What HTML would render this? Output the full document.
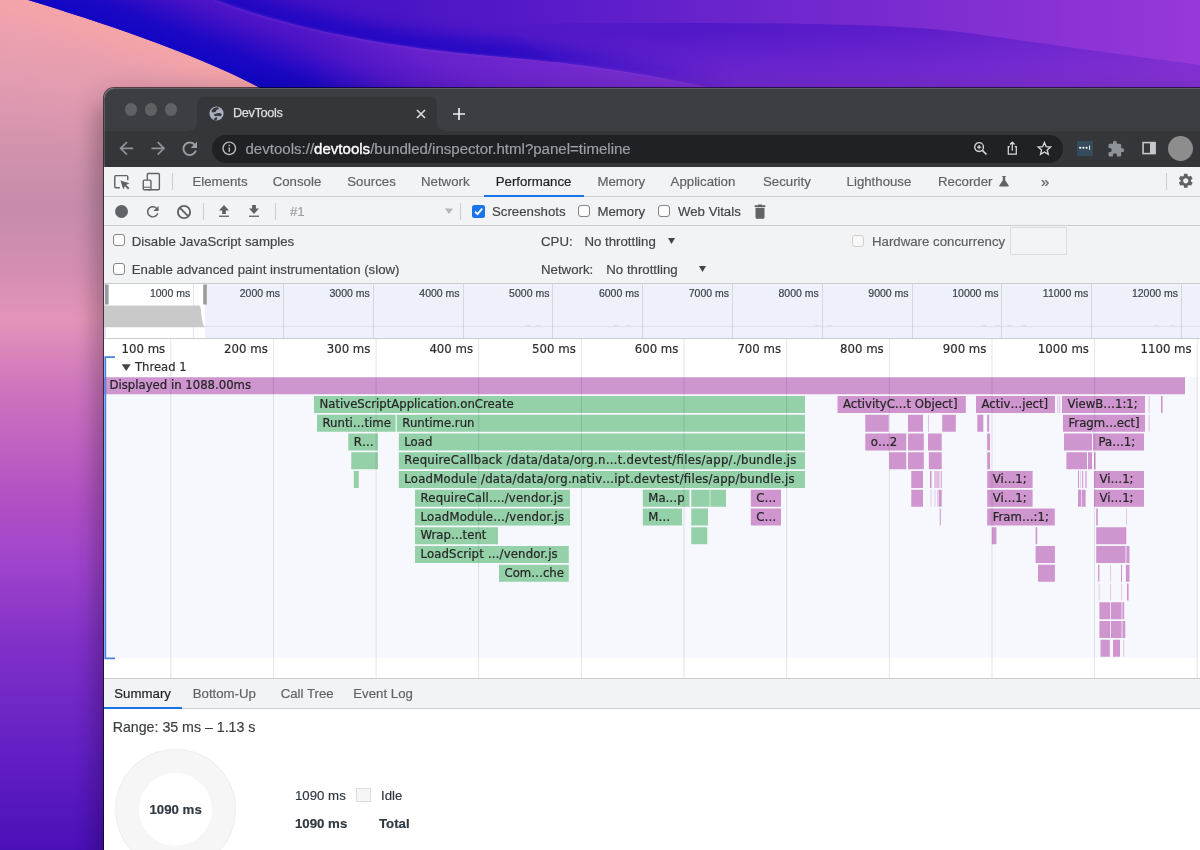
<!DOCTYPE html>
<html lang="en">
<head>
<meta charset="utf-8">
<title>DevTools</title>
<style>
html,body{margin:0;padding:0;}
body{width:1200px;height:850px;overflow:hidden;position:relative;background:#7a2ccc;font-family:"Liberation Sans",sans-serif;}
#wall{position:absolute;left:0;top:0;}
#flame{position:absolute;left:0;top:0;}
#win{position:absolute;left:104px;top:88px;width:1120px;height:800px;border-radius:10px 0 0 0;background:#fff;box-shadow:0 10px 30px rgba(0,0,0,.32),0 0 0 1px rgba(0,0,0,.6);will-change:transform;overflow:hidden;}
.abs{position:absolute;}
#tabstrip{left:0;top:0;width:1120px;height:43px;background:#3c3e43;}
#tab{left:92px;top:8px;width:240px;height:36px;background:#35363a;border-radius:9px 9px 0 0;}
#navbar{left:0;top:42.500px;width:1120px;height:36px;background:#35363a;}
#pill{left:108px;top:46.5px;width:851px;height:28px;border-radius:14px;background:#202124;}
.tl{width:12.4px;height:12.4px;border-radius:6.2px;background:#5f6165;top:15.3px;}
.t{position:absolute;white-space:pre;line-height:1;-webkit-text-stroke:0.18px currentColor;}
#dt-tabs{left:0;top:79px;width:1120px;height:29px;background:#f1f3f4;border-bottom:1px solid #cbcdd1;}
#dt-tool{left:0;top:109px;width:1120px;height:28px;background:#f1f3f4;border-bottom:1px solid #cbcdd1;}
#dt-set{left:0;top:138px;width:1120px;height:57px;background:#f1f3f4;border-bottom:1px solid #cbcdd1;}
.tabt{font-size:13.24px;color:#5f6368;top:87.4px;}
.lbl{font-size:13.24px;color:#42464b;}
.cb{position:absolute;width:10px;height:10px;border:1.25px solid #858585;border-radius:3px;background:#fff;}
.vsep{position:absolute;width:1px;background:#cbcdd1;}
#ov{left:0;top:196px;width:1120px;height:54px;background:#fff;border-bottom:1px solid #cbcdd1;}
#fc{left:0;top:251px;width:1120px;height:339px;background:#fff;}
#fcbg{left:0;top:289px;width:1094px;height:281px;background:#f6f8fe;}
#btabs{left:0;top:590px;width:1120px;height:29px;background:#f1f3f4;border-top:1px solid #cbcdd1;border-bottom:1px solid #cbcdd1;}
.ovl{font-size:10.500px;color:#3a404a;top:200px;text-align:right;width:60px;}
</style>
</head>
<body>
<svg id="wall" width="1200" height="850" viewBox="0 0 1200 850">
<defs>
<linearGradient id="gl" x1="0" y1="0" x2="0" y2="1">
<stop offset="0" stop-color="#eea2b0"/><stop offset="0.12" stop-color="#dc98b0"/><stop offset="0.24" stop-color="#c68caa"/>
<stop offset="0.32" stop-color="#d48eb0"/><stop offset="0.375" stop-color="#e494b8"/><stop offset="0.46" stop-color="#cc74be"/>
<stop offset="0.59" stop-color="#b050c4"/><stop offset="0.66" stop-color="#a044cc"/><stop offset="0.76" stop-color="#8030c8"/>
<stop offset="0.88" stop-color="#6420c4"/><stop offset="1" stop-color="#4a10b8"/>
</linearGradient>
<linearGradient id="gp" gradientUnits="userSpaceOnUse" x1="150" y1="40" x2="105" y2="160">
<stop offset="0" stop-color="#f8a6a4" stop-opacity="0.8"/><stop offset="0.3" stop-color="#f4a4aa" stop-opacity="0.35"/><stop offset="1" stop-color="#eea2b0" stop-opacity="0"/>
</linearGradient>
<linearGradient id="gt" x1="0" y1="0" x2="1" y2="0">
<stop offset="0" stop-color="#3a10c4"/><stop offset="0.2" stop-color="#4010c4"/><stop offset="0.4" stop-color="#5218c8"/><stop offset="0.6" stop-color="#6a24cc"/>
<stop offset="0.8" stop-color="#802ed2"/><stop offset="1" stop-color="#9838d8"/>
</linearGradient>
<linearGradient id="gm" x1="0" y1="0" x2="1" y2="0">
<stop offset="0" stop-color="#5218c8"/><stop offset="0.25" stop-color="#5018c8"/><stop offset="0.6" stop-color="#5e1eca"/><stop offset="1" stop-color="#7a2cd0"/>
</linearGradient>
<linearGradient id="gmv" gradientUnits="userSpaceOnUse" x1="0" y1="30" x2="0" y2="92">
<stop offset="0" stop-color="#9038d6" stop-opacity="0"/><stop offset="1" stop-color="#9038d6" stop-opacity="0.55"/>
</linearGradient>
<linearGradient id="gb" gradientUnits="userSpaceOnUse" x1="150" y1="40" x2="215" y2="-130">
<stop offset="0" stop-color="#1206c4"/><stop offset="0.1" stop-color="#1c08c4"/><stop offset="0.28" stop-color="#4a12c6"/><stop offset="0.45" stop-color="#5e1cca"/><stop offset="1" stop-color="#6c26cc"/>
</linearGradient>
<linearGradient id="gbx" x1="0" y1="0" x2="1" y2="0">
<stop offset="0" stop-color="#7a2ed0" stop-opacity="0"/><stop offset="0.4" stop-color="#7a2ed0" stop-opacity="0"/><stop offset="1" stop-color="#7e30d2" stop-opacity="0.9"/>
</linearGradient>
<linearGradient id="gs" gradientUnits="userSpaceOnUse" x1="215" y1="0" x2="740" y2="0"><stop offset="0" stop-color="#1c06c2"/><stop offset="0.55" stop-color="#2409c3"/><stop offset="1" stop-color="#3c10c6" stop-opacity="0"/></linearGradient>
<filter id="bl" color-interpolation-filters="sRGB" filterUnits="userSpaceOnUse" x="-50" y="-100" width="1300" height="300"><feGaussianBlur stdDeviation="7"/></filter>
<filter id="bls" color-interpolation-filters="sRGB" filterUnits="userSpaceOnUse" x="0" y="0" width="300" height="900"><feGaussianBlur stdDeviation="7"/></filter>
<filter id="bl2" color-interpolation-filters="sRGB" x="-20%" y="-50%" width="140%" height="200%"><feGaussianBlur stdDeviation="1.2"/></filter>
<clipPath id="cpM"><path d="M215,0 C300,32 400,49 500,57 C600,65 660,77 720,90 L1200,90 L1200,0 Z"/></clipPath>
</defs>
<rect width="1200" height="850" fill="url(#gl)"/>
<path d="M0,0 L28,0 C100,22 200,55 262,88 L262,300 L0,300 Z" fill="url(#gp)"/>
<rect x="90" y="110" width="20" height="760" fill="#000" opacity="0.07" filter="url(#bls)"/>
<g>
<path d="M28,0 C100,22 200,55 264,90 L1200,90 L1200,0 Z" fill="url(#gt)"/>
<path d="M500,57 C600,65 660,77 720,90 L1200,90 L1200,65 C1100,52 1020,40 960,32 C900,25 800,21 500,24 Z" fill="url(#gm)"/>
<path d="M500,24 C800,21 900,25 960,32 C1020,40 1100,52 1200,65 L1200,92 L600,92 Z" fill="url(#gmv)"/>
<g clip-path="url(#cpM)"><path d="M215,0 C300,32 400,49 500,57 C600,65 660,77 720,90" fill="none" stroke="url(#gs)" stroke-width="34" opacity="0.85" filter="url(#bl)"/></g>
<path d="M28,0 C100,22 200,55 264,90 L720,90 C660,77 600,65 500,57 C400,49 300,32 215,0 Z" fill="url(#gb)"/>
<path d="M28,0 C100,22 200,55 264,90 L720,90 C660,77 600,65 500,57 C400,49 300,32 215,0 Z" fill="url(#gbx)"/>
<path d="M215,0 C300,32 400,49 500,57 C600,65 660,77 720,90" fill="none" stroke="#8a48dc" stroke-width="1.5" opacity="0.35" filter="url(#bl2)"/>
</g>
</svg>

<div id="win">
 <div id="tabstrip" class="abs"></div>
 <svg class="abs" style="left:80px;top:0" width="270" height="43" viewBox="184 88 270 43"><path fill="#35363a" d="M188.500 131 L188.500 130.500 Q197 130.500 197 122 L197 104.500 Q197 96.400 205 96.400 L429 96.400 Q437 96.400 437 104.500 L437 122 Q437 130.500 445.500 130.500 L445.500 131 Z"/></svg>
 <div id="navbar" class="abs"></div>
 <div id="pill" class="abs"></div>
 <div class="abs tl" style="left:20.600px"></div><div class="abs tl" style="left:40.600px"></div><div class="abs tl" style="left:60.600px"></div>
 <div class="t" style="left:129px;top:19px;font-size:12.7px;color:#dcdee1;letter-spacing:-0.35px;-webkit-text-stroke:0.25px #dcdee1">DevTools</div>
 <div class="t" style="left:141.5px;top:52.5px;font-size:15.050px;color:#9aa0a6">devtools://<span style="color:#fff;-webkit-text-stroke:0.35px #fff">devtools</span>/bundled/inspector.html?panel=timeline</div>
 <!--CHROMEICONS-->
 <svg class="abs" style="left:11.60px;top:50.20px" width="20.6" height="20.6" viewBox="0 0 24 24" ><path fill="#8f9399" d="M20 11H7.83l5.59-5.59L12 4l-8 8 8 8 1.41-1.41L7.83 13H20v-2z"/></svg>
 <svg class="abs" style="left:43.70px;top:50.20px" width="20.6" height="20.6" viewBox="0 0 24 24" ><path fill="#8f9399" d="M12 4l-1.41 1.41L16.17 11H4v2h12.17l-5.58 5.59L12 20l8-8z"/></svg>
 <svg class="abs" style="left:75.20px;top:49.50px" width="21.6" height="21.6" viewBox="0 0 24 24" ><path fill="#9aa0a6" d="M17.65 6.35C16.2 4.9 14.21 4 12 4c-4.42 0-7.99 3.58-7.99 8s3.57 8 7.99 8c3.73 0 6.84-2.55 7.73-6h-2.08c-.82 2.33-3.04 4-5.65 4-3.31 0-6-2.69-6-6s2.69-6 6-6c1.66 0 3.14.69 4.22 1.78L13 11h7V4l-2.35 2.35z"/></svg>
 <svg class="abs" style="left:117.30px;top:52.20px" width="16.6" height="16.6" viewBox="0 0 24 24" ><path fill="#b9bdc3" d="M11 17h2v-6h-2v6zm1-15C6.48 2 2 6.48 2 12s4.48 10 10 10 10-4.48 10-10S17.52 2 12 2zm0 18c-4.41 0-8-3.59-8-8s3.59-8 8-8 8 3.59 8 8-3.59 8-8 8zM11 9h2V7h-2v2z"/></svg>
 <svg class="abs" style="left:104.40px;top:16.80px" width="17" height="17" viewBox="0 0 24 24" ><circle cx="12" cy="12" r="10" fill="#a9b0bb"/><g fill="#35363a" transform="translate(12 12) scale(1.22) translate(-12.200 -12.400)"><path d="M6.500 9.300C7.500 7 10 5.200 13.400 5.200C14.600 5.400 15.200 6.200 14.900 6.900C14.200 7.800 13 7.600 12.400 8.300C11.800 9.200 11.600 10.400 10.600 10.800C9.400 11.300 7.600 11.200 6.800 10.600Z"/><path d="M9 13.400C10.400 12.400 12 12.600 13.400 12.100C15 11.600 17.200 12.200 18.200 13.200C18 14.600 17.200 15.600 16.100 15.600C15.200 15.400 14.400 14.800 13.400 14.900C12.600 15 12.200 15.600 11.400 15.600C10.400 15.500 9.200 14.600 9 13.400Z"/><path d="M9 18.600C10 17.800 11 16.900 12 16.700C12.800 16.900 13.400 17.300 13.400 17.900C12.900 18.900 12.200 19.800 11.400 20.300C10.400 20.100 9.400 19.500 9 18.600Z"/></g></svg>
 <svg class="abs" style="left:311.60px;top:20.50px" width="10" height="10" viewBox="0 0 10 10" ><path d="M1 1 L9 9 M9 1 L1 9" stroke="#dfe1e5" stroke-width="1.5" fill="none"/></svg>
 <svg class="abs" style="left:347.75px;top:18.50px" width="14" height="14" viewBox="0 0 14 14" ><path d="M7 1 V13 M1 7 H13" stroke="#eceef1" stroke-width="1.7" fill="none"/></svg>
 <svg class="abs" style="left:868.00px;top:51.80px" width="17" height="17" viewBox="0 0 24 24" ><g fill="none" stroke="#d5d8dc" stroke-width="1.9"><circle cx="10" cy="10" r="6.2"/><path d="M14.6 14.6 L20.5 20.5" stroke-width="2.3"/><path d="M10 7v6M7 10h6" stroke-width="1.6"/></g></svg>
 <svg class="abs" style="left:900.20px;top:52.00px" width="16.6" height="16.6" viewBox="0 0 24 24" ><g fill="none" stroke="#d5d8dc" stroke-width="1.8"><path d="M8.5 9.5H6.2v11h11.6v-11h-2.3"/><path d="M12 15.5V3.5M8.6 6.6L12 3.2l3.4 3.400"/></g></svg>
 <svg class="abs" style="left:932.10px;top:51.80px" width="16.8" height="16.8" viewBox="0 0 24 24" ><path fill="none" stroke="#d5d8dc" stroke-width="1.9" stroke-linejoin="miter" d="M12 3.6l2.55 5.9 6.35.55-4.82 4.2 1.450 6.25L12 17.2l-5.53 3.300 1.45-6.25-4.82-4.2 6.35-.55z"/></svg>
 <div class="abs" style="left:973px;top:52.5px;width:15.5px;height:15.5px;background:#364c5c;border-radius:1px"></div>
 <svg class="abs" style="left:972.95px;top:52.45px" width="15.5" height="15.5" viewBox="0 0 15.5 15.5" ><g fill="#fff"><circle cx="3.2" cy="7.75" r="1.1"/><circle cx="6.4" cy="7.75" r="1.1"/><circle cx="9.6" cy="7.75" r="1.1"/><rect x="12" y="5.6" width="0.9" height="4.3"/></g></svg>
 <svg class="abs" style="left:1003.00px;top:51.50px" width="18" height="18" viewBox="0 0 24 24" ><path fill="#8d9298" d="M20.5 11H19V7c0-1.1-.9-2-2-2h-4V3.5C13 2.12 11.880 1 10.5 1S8 2.12 8 3.5V5H4c-1.100 0-1.990.9-1.990 2v3.800H3.500c1.490 0 2.700 1.210 2.700 2.700s-1.210 2.700-2.700 2.700H2V20c0 1.100.9 2 2 2h3.800v-1.500c0-1.490 1.210-2.700 2.700-2.700 1.490 0 2.700 1.210 2.700 2.700V22H17c1.100 0 2-.9 2-2v-4h1.500c1.380 0 2.500-1.120 2.500-2.500S21.880 11 20.500 11z"/></svg>
 <svg class="abs" style="left:1037.60px;top:53.40px" width="14.2" height="14.2" viewBox="0 0 16 16" ><rect x="1.200" y="1.800" width="13.600" height="12.400" fill="none" stroke="#c4c7cc" stroke-width="1.800"/><rect x="9" y="1.8" width="5.8" height="12.4" fill="#c4c7cc"/></svg>
 <div class="abs" style="left:1064.0px;top:48.099999999999994px;width:25px;height:25px;border-radius:50%;background:#8d8d8d"></div>
 <!--/CHROMEICONS-->

 <div class="abs" style="left:0;top:0;width:1130px;height:79px;border-radius:10px 0 0 0;box-shadow:inset 1px 1px 0 rgba(255,255,255,.16);pointer-events:none"></div>
 <div id="dt-tabs" class="abs"></div>
 <div class="t tabt" style="left:88.4px">Elements</div>
 <div class="t tabt" style="left:168.7px">Console</div>
 <div class="t tabt" style="left:243.3px">Sources</div>
 <div class="t tabt" style="left:317px">Network</div>
 <div class="t tabt" style="left:391.7px;color:#202124">Performance</div>
 <div class="t tabt" style="left:493.4px">Memory</div>
 <div class="t tabt" style="left:566.6px">Application</div>
 <div class="t tabt" style="left:659px">Security</div>
 <div class="t tabt" style="left:742.6px">Lighthouse</div>
 <div class="t tabt" style="left:834px">Recorder</div>
 <div class="t tabt" style="left:937px;font-size:15px;top:86px">»</div>
 <div class="abs" style="left:380px;top:107px;width:100px;height:2px;background:#1a73e8"></div>
 <div class="vsep" style="left:67.5px;top:85px;height:17px"></div>
 <div class="vsep" style="left:1062px;top:85px;height:17px"></div>
 <!--DTICONS-->
 <svg class="abs" style="left:8.80px;top:84.50px" width="17.6" height="17.6" viewBox="0 0 16 16" ><g fill="none" stroke="#5f6368" stroke-width="1.300"><path d="M6.200 13.400H2.600c-.55 0-1-.45-1-1V3.400c0-.55.45-1 1-1h9.800c.55 0 1 .45 1 1v3.200"/></g><path fill="#5f6368" d="M6.800 6.800l2.500 8.200 1.500-3 2.900 2.900 1.200-1.200-2.900-2.900 3-1.500z"/></svg>
 <svg class="abs" style="left:38.20px;top:83.90px" width="19.2" height="19.2" viewBox="0 0 18 18" ><g fill="none" stroke="#5f6368" stroke-width="1.300"><rect x="5" y="1.400" width="11.300" height="15.200" rx="1"/><rect x="1.2" y="7.600" width="7.200" height="9" rx="1" fill="#f1f3f4"/></g><path d="M1.800 14.300h6" stroke="#5f6368" stroke-width="1"/></svg>
 <svg class="abs" style="left:1073.25px;top:84.25px" width="17.5" height="17.5" viewBox="0 0 24 24" ><path fill="#5f6368" d="M19.140 12.940c.04-.3.060-.61.060-.94 0-.32-.02-.64-.07-.94l2.030-1.580c.18-.14.230-.41.120-.61l-1.920-3.320c-.12-.22-.37-.29-.59-.22l-2.390.96c-.5-.38-1.030-.7-1.620-.94l-.36-2.540c-.04-.24-.24-.41-.48-.41h-3.840c-.24 0-.43.170-.47.410l-.36 2.540c-.59.240-1.130.570-1.620.940l-2.390-.96c-.22-.08-.47 0-.59.220L2.740 8.870c-.12.210-.08.470.12.610l2.030 1.580c-.05.300-.09.630-.09.940s.02.640.07.940l-2.030 1.580c-.18.140-.23.410-.12.610l1.920 3.320c.12.220.37.290.59.220l2.390-.96c.5.380 1.030.7 1.620.94l.36 2.540c.05.240.24.410.48.410h3.840c.24 0 .44-.17.470-.41l.36-2.540c.59-.24 1.130-.56 1.620-.94l2.390.96c.22.080.47 0 .59-.22l1.920-3.320c.12-.22.070-.47-.12-.61l-2.010-1.580zM12 15.600c-1.980 0-3.600-1.620-3.600-3.600s1.620-3.600 3.600-3.600 3.600 1.620 3.600 3.600-1.620 3.600-3.600 3.600z"/></svg>
 <svg class="abs" style="left:893.50px;top:87.00px" width="12" height="12" viewBox="0 0 12 12" ><path fill="#5f6368" d="M4.300 1h3.400v1H7.200v3.200l3.500 5.300c.3.500 0 1.100-.6 1.100H1.900c-.6 0-.9-.6-.6-1.100l3.500-5.300V2H4.300z"/></svg>
 <!--/DTICONS-->

 <div id="dt-tool" class="abs"></div>
 <div class="vsep" style="left:99px;top:114.5px;height:17px"></div>
 <div class="vsep" style="left:170.5px;top:114.5px;height:17px"></div>
 <div class="vsep" style="left:356px;top:114.5px;height:17px"></div>
 <div class="t" style="left:186px;top:117px;font-size:13.24px;color:#9aa0a6">#1</div>
 <div class="t lbl" style="left:388px;top:117px">Screenshots</div>
 <div class="t lbl" style="left:493.4px;top:117px">Memory</div>
 <div class="t lbl" style="left:574px;top:117px">Web Vitals</div>
 <div class="abs" style="left:368px;top:117px;width:13px;height:13px;border-radius:2.500px;background:#1a73e8"></div>
 <svg class="abs" style="left:368px;top:117px" width="13" height="13" viewBox="0 0 13 13"><path d="M3 6.6 L5.5 9.2 L10.2 3.6" fill="none" stroke="#fff" stroke-width="1.8"/></svg>
 <div class="cb" style="left:474px;top:117.300px"></div>
 <div class="cb" style="left:553.500px;top:117.300px"></div>
 <!--TOOLICONS-->
 <div class="abs" style="left:10.50px;top:116.75px;width:13.5px;height:13.5px;border-radius:50%;background:#5f6368"></div>
 <svg class="abs" style="left:39.55px;top:114.55px" width="17.5" height="17.5" viewBox="0 0 24 24" ><path fill="#5f6368" d="M17.65 6.35C16.2 4.9 14.21 4 12 4c-4.42 0-7.99 3.58-7.99 8s3.57 8 7.99 8c3.73 0 6.84-2.55 7.73-6h-2.08c-.82 2.33-3.04 4-5.65 4-3.31 0-6-2.69-6-6s2.69-6 6-6c1.66 0 3.14.69 4.22 1.78L13 11h7V4l-2.35 2.35z"/></svg>
 <svg class="abs" style="left:71.80px;top:115.50px" width="16" height="16" viewBox="0 0 16 16" ><g fill="none" stroke="#5f6368" stroke-width="1.900"><circle cx="8" cy="8" r="6.100"/><path d="M3.700 3.700L12.300 12.300"/></g></svg>
 <svg class="abs" style="left:112.50px;top:116.30px" width="14" height="14" viewBox="0 0 14 14" ><path fill="#5f6368" d="M7 1L2 6.500h3.100V10h3.800V6.500H12z"/><rect x="2" y="11.600" width="10" height="1.300" fill="#5f6368"/></svg>
 <svg class="abs" style="left:143.40px;top:116.30px" width="14" height="14" viewBox="0 0 14 14" ><path fill="#5f6368" d="M7 10L2 4.500h3.100V1h3.800v3.500H12z"/><rect x="2" y="11.600" width="10" height="1.300" fill="#5f6368"/></svg>
 <svg class="abs" style="left:339.60px;top:117.80px" width="10" height="10" viewBox="0 0 10 10" ><path fill="#b4b4b4" d="M1 2.500h8L5 8z"/></svg>
 <svg class="abs" style="left:648.00px;top:115.40px" width="16" height="16" viewBox="0 0 16 16" ><path fill="#5f6368" d="M3.500 14.200c0 .9.700 1.600 1.600 1.600h5.800c.9 0 1.600-.7 1.600-1.600V4.800h-9zM13.300 2.200h-2.900L9.600 1.400H6.400l-.8.800H2.700v1.700h10.600z"/></svg>
 <!--/TOOLICONS-->

 <div id="dt-set" class="abs"></div>
 <div class="cb" style="left:8.800px;top:146.300px"></div>
 <div class="cb" style="left:8.800px;top:175.200px"></div>
 <div class="t lbl" style="left:27.7px;top:146.9px">Disable JavaScript samples</div>
 <div class="t lbl" style="left:27.7px;top:174.9px">Enable advanced paint instrumentation (slow)</div>
 <div class="t lbl" style="left:437px;top:146.9px">CPU:</div>
 <div class="t lbl" style="left:480.4px;top:146.9px">No throttling</div>
 <div class="t lbl" style="left:437px;top:174.9px">Network:</div>
 <div class="t lbl" style="left:502.3px;top:174.9px">No throttling</div>
 <svg class="abs" style="left:564px;top:150px" width="7" height="6" viewBox="0 0 7 6"><path d="M0 0H7L3.500 6Z" fill="#444"/></svg>
 <svg class="abs" style="left:595px;top:178.200px" width="7" height="6" viewBox="0 0 7 6"><path d="M0 0H7L3.500 6Z" fill="#444"/></svg>
 <div class="cb" style="left:748px;top:146.500px;border-color:#cfcfcf;background:#f8f8f8"></div>
 <div class="t lbl" style="left:768px;top:146.9px;color:#5c6065">Hardware concurrency</div>
 <div class="abs" style="left:906px;top:139px;width:55px;height:26px;border:1px solid #dcdde0;background:#f3f4f5"></div>

 <div id="ov" class="abs"></div>
 <!--OVERVIEW-->
 <div class="abs" style="left:101.2px;top:196px;width:1000px;height:54px;background:#eef1fa"></div>
 <div class="abs" style="left:0;top:196px;width:1.5px;height:54px;background:#dfe6f8"></div>
 <div class="abs" style="left:89.2px;top:196px;width:1px;height:54px;background:rgba(0,0,0,0.1)"></div>
 <div class="t ovl" style="left:26.2px;top:199.9px">1000 ms</div>
 <div class="abs" style="left:179.0px;top:196px;width:1px;height:54px;background:rgba(0,0,0,0.1)"></div>
 <div class="t ovl" style="left:116.0px;top:199.9px">2000 ms</div>
 <div class="abs" style="left:268.8px;top:196px;width:1px;height:54px;background:rgba(0,0,0,0.1)"></div>
 <div class="t ovl" style="left:205.8px;top:199.9px">3000 ms</div>
 <div class="abs" style="left:358.6px;top:196px;width:1px;height:54px;background:rgba(0,0,0,0.1)"></div>
 <div class="t ovl" style="left:295.6px;top:199.9px">4000 ms</div>
 <div class="abs" style="left:448.4px;top:196px;width:1px;height:54px;background:rgba(0,0,0,0.1)"></div>
 <div class="t ovl" style="left:385.4px;top:199.9px">5000 ms</div>
 <div class="abs" style="left:538.2px;top:196px;width:1px;height:54px;background:rgba(0,0,0,0.1)"></div>
 <div class="t ovl" style="left:475.2px;top:199.9px">6000 ms</div>
 <div class="abs" style="left:628.0px;top:196px;width:1px;height:54px;background:rgba(0,0,0,0.1)"></div>
 <div class="t ovl" style="left:565.0px;top:199.9px">7000 ms</div>
 <div class="abs" style="left:717.8px;top:196px;width:1px;height:54px;background:rgba(0,0,0,0.1)"></div>
 <div class="t ovl" style="left:654.8px;top:199.9px">8000 ms</div>
 <div class="abs" style="left:807.6px;top:196px;width:1px;height:54px;background:rgba(0,0,0,0.1)"></div>
 <div class="t ovl" style="left:744.6px;top:199.9px">9000 ms</div>
 <div class="abs" style="left:897.4px;top:196px;width:1px;height:54px;background:rgba(0,0,0,0.1)"></div>
 <div class="t ovl" style="left:834.4px;top:199.9px">10000 ms</div>
 <div class="abs" style="left:987.2px;top:196px;width:1px;height:54px;background:rgba(0,0,0,0.1)"></div>
 <div class="t ovl" style="left:924.2px;top:199.9px">11000 ms</div>
 <div class="abs" style="left:1077.0px;top:196px;width:1px;height:54px;background:rgba(0,0,0,0.1)"></div>
 <div class="t ovl" style="left:1014.0px;top:199.9px">12000 ms</div>
 <div class="abs" style="left:0;top:238.2px;width:1120px;height:1px;background:rgba(0,0,0,0.07)"></div>
 <svg class="abs" style="left:0;top:196px" width="120" height="54" viewBox="104 284 120 54"><path fill="#c9c9c9" d="M104 305.500H198.500C200.500 305.500 201 309 201.500 315C202 321 203 325.500 205.500 327.200H104z"/><rect x="105" y="284.500" width="3.600" height="20" fill="#9b9b9b"/><rect x="203.200" y="284.500" width="3.600" height="20" fill="#9b9b9b"/></svg>
 <div class="abs" style="left:421px;top:237.2px;width:5px;height:1px;background:rgba(0,0,0,0.07)"></div><div class="abs" style="left:432px;top:237.2px;width:5px;height:1px;background:rgba(0,0,0,0.07)"></div><div class="abs" style="left:510px;top:237.2px;width:5px;height:1px;background:rgba(0,0,0,0.07)"></div><div class="abs" style="left:522px;top:237.2px;width:5px;height:1px;background:rgba(0,0,0,0.07)"></div><div class="abs" style="left:711px;top:237.2px;width:5px;height:1px;background:rgba(0,0,0,0.07)"></div><div class="abs" style="left:723px;top:237.2px;width:5px;height:1px;background:rgba(0,0,0,0.07)"></div><div class="abs" style="left:877px;top:237.2px;width:5px;height:1px;background:rgba(0,0,0,0.07)"></div><div class="abs" style="left:891px;top:237.2px;width:5px;height:1px;background:rgba(0,0,0,0.07)"></div><div class="abs" style="left:903px;top:237.2px;width:5px;height:1px;background:rgba(0,0,0,0.07)"></div><div class="abs" style="left:917px;top:237.2px;width:5px;height:1px;background:rgba(0,0,0,0.07)"></div><div class="abs" style="left:1050px;top:237.2px;width:5px;height:1px;background:rgba(0,0,0,0.07)"></div><div class="abs" style="left:1066px;top:237.2px;width:5px;height:1px;background:rgba(0,0,0,0.07)"></div>
 <!--/OVERVIEW-->

 <div id="fc" class="abs"></div>
 <div id="fcbg" class="abs"></div>

 <div id="btabs" class="abs"></div>
 <div class="t" style="left:10.3px;top:598.8px;font-size:13.24px;color:#202124">Summary</div>
 <div class="t" style="left:88.7px;top:598.8px;font-size:13.24px;color:#5f6368">Bottom-Up</div>
 <div class="t" style="left:176.7px;top:598.8px;font-size:13.24px;color:#5f6368">Call Tree</div>
 <div class="t" style="left:249.3px;top:598.8px;font-size:13.24px;color:#5f6368">Event Log</div>
 <div class="abs" style="left:0;top:619px;width:78px;height:2.2px;background:#1a73e8"></div>
 <div class="t" style="left:8.7px;top:631.7px;font-size:14.2px;color:#3c4043">Range: 35 ms – 1.13 s</div>
 <div class="abs" style="left:11px;top:660.5px;width:121px;height:121px;border-radius:50%;background:#f6f6f6;box-shadow:inset 0 0 0 1px #efefef"></div>
 <div class="abs" style="left:35px;top:684.5px;width:73px;height:73px;border-radius:50%;background:#fff"></div>
 <div class="t" style="left:45.5px;top:714.5px;font-size:13.24px;font-weight:bold;color:#303942">1090 ms</div>
 <div class="t" style="left:191px;top:700.5px;font-size:13.24px;color:#303942">1090 ms</div>
 <div class="abs" style="left:252px;top:699.5px;width:12.5px;height:12.5px;border:1px solid #ddd;background:#f6f6f6"></div>
 <div class="t" style="left:277px;top:700.5px;font-size:13.24px;color:#303942">Idle</div>
 <div class="t" style="left:191px;top:728.5px;font-size:13.24px;font-weight:bold;color:#303942">1090 ms</div>
 <div class="t" style="left:275px;top:728.5px;font-size:13.24px;font-weight:bold;color:#303942">Total</div>
</div>
<svg id="flame" width="1200" height="850" viewBox="0 0 1200 850">
<g shape-rendering="auto"><rect x="104.0" y="377.25" width="1081.0" height="17.0" fill="#cf95cf"/><rect x="314.0" y="396.00" width="491.0" height="17.0" fill="#94d1a9"/><rect x="837.5" y="396.00" width="128.3" height="17.0" fill="#cf95cf"/><rect x="976.0" y="396.00" width="79.0" height="17.0" fill="#cf95cf"/><rect x="1057.2" y="396.00" width="1.0" height="17.0" fill="#e2bfe4"/><rect x="1059.2" y="396.00" width="1.0" height="17.0" fill="#e2bfe4"/><rect x="1062.0" y="396.00" width="83.0" height="17.0" fill="#cf95cf"/><rect x="1148.6" y="396.00" width="1.0" height="17.0" fill="#e2bfe4"/><rect x="1161.0" y="396.00" width="1.6" height="17.0" fill="#cf95cf"/><rect x="317.0" y="414.75" width="78.6" height="17.0" fill="#94d1a9"/><rect x="396.8" y="414.75" width="408.2" height="17.0" fill="#94d1a9"/><rect x="865.3" y="414.75" width="23.4" height="17.0" fill="#cf95cf"/><rect x="908.0" y="414.75" width="15.0" height="17.0" fill="#cf95cf"/><rect x="928.0" y="414.75" width="1.0" height="17.0" fill="#e2bfe4"/><rect x="942.2" y="414.75" width="13.6" height="17.0" fill="#cf95cf"/><rect x="977.3" y="414.75" width="6.0" height="17.0" fill="#cf95cf"/><rect x="987.2" y="414.75" width="2.0" height="17.0" fill="#cf95cf"/><rect x="1063.0" y="414.75" width="82.0" height="17.0" fill="#cf95cf"/><rect x="1148.6" y="414.75" width="1.0" height="17.0" fill="#e2bfe4"/><rect x="348.3" y="433.50" width="29.7" height="17.0" fill="#94d1a9"/><rect x="398.8" y="433.50" width="406.2" height="17.0" fill="#94d1a9"/><rect x="865.3" y="433.50" width="41.0" height="17.0" fill="#cf95cf"/><rect x="908.0" y="433.50" width="15.8" height="17.0" fill="#cf95cf"/><rect x="928.0" y="433.50" width="13.7" height="17.0" fill="#cf95cf"/><rect x="987.2" y="433.50" width="2.8" height="17.0" fill="#cf95cf"/><rect x="1064.0" y="433.50" width="28.0" height="17.0" fill="#cf95cf"/><rect x="1093.0" y="433.50" width="51.0" height="17.0" fill="#cf95cf"/><rect x="351.3" y="452.25" width="26.7" height="17.0" fill="#94d1a9"/><rect x="398.8" y="452.25" width="406.2" height="17.0" fill="#94d1a9"/><rect x="889.2" y="452.25" width="17.1" height="17.0" fill="#cf95cf"/><rect x="908.0" y="452.25" width="15.8" height="17.0" fill="#cf95cf"/><rect x="928.8" y="452.25" width="12.9" height="17.0" fill="#cf95cf"/><rect x="987.2" y="452.25" width="2.8" height="17.0" fill="#cf95cf"/><rect x="1066.4" y="452.25" width="20.6" height="17.0" fill="#cf95cf"/><rect x="1088.0" y="452.25" width="4.0" height="17.0" fill="#cf95cf"/><rect x="1094.0" y="452.25" width="1.6" height="17.0" fill="#cf95cf"/><rect x="353.8" y="471.00" width="5.0" height="17.0" fill="#94d1a9"/><rect x="398.8" y="471.00" width="406.2" height="17.0" fill="#94d1a9"/><rect x="911.3" y="471.00" width="11.7" height="17.0" fill="#cf95cf"/><rect x="930.0" y="471.00" width="1.5" height="17.0" fill="#cf95cf"/><rect x="934.2" y="471.00" width="5.5" height="17.0" fill="#e2bfe4"/><rect x="940.8" y="471.00" width="0.9" height="17.0" fill="#cf95cf"/><rect x="987.2" y="471.00" width="45.4" height="17.0" fill="#cf95cf"/><rect x="1078.0" y="471.00" width="1.0" height="17.0" fill="#cf95cf"/><rect x="1080.3" y="471.00" width="0.7" height="17.0" fill="#e2bfe4"/><rect x="1082.2" y="471.00" width="1.0" height="17.0" fill="#cf95cf"/><rect x="1085.4" y="471.00" width="1.2" height="17.0" fill="#cf95cf"/><rect x="1094.0" y="471.00" width="50.0" height="17.0" fill="#cf95cf"/><rect x="415.0" y="489.75" width="155.0" height="17.0" fill="#94d1a9"/><rect x="642.8" y="489.75" width="46.7" height="17.0" fill="#94d1a9"/><rect x="691.3" y="489.75" width="18.4" height="17.0" fill="#94d1a9"/><rect x="710.3" y="489.75" width="15.7" height="17.0" fill="#94d1a9"/><rect x="750.8" y="489.75" width="30.2" height="17.0" fill="#cf95cf"/><rect x="911.3" y="489.75" width="11.7" height="17.0" fill="#cf95cf"/><rect x="930.6" y="489.75" width="0.9" height="17.0" fill="#e2bfe4"/><rect x="934.6" y="489.75" width="0.8" height="17.0" fill="#e2bfe4"/><rect x="937.0" y="489.75" width="0.8" height="17.0" fill="#e2bfe4"/><rect x="938.6" y="489.75" width="3.1" height="17.0" fill="#cf95cf"/><rect x="987.2" y="489.75" width="45.4" height="17.0" fill="#cf95cf"/><rect x="1078.0" y="489.75" width="3.0" height="17.0" fill="#cf95cf"/><rect x="1081.6" y="489.75" width="4.0" height="17.0" fill="#cf95cf"/><rect x="1094.0" y="489.75" width="50.0" height="17.0" fill="#cf95cf"/><rect x="415.0" y="508.50" width="155.0" height="17.0" fill="#94d1a9"/><rect x="642.8" y="508.50" width="39.2" height="17.0" fill="#94d1a9"/><rect x="691.3" y="508.50" width="16.7" height="17.0" fill="#94d1a9"/><rect x="750.8" y="508.50" width="30.2" height="17.0" fill="#cf95cf"/><rect x="939.8" y="508.50" width="1.0" height="17.0" fill="#cf95cf"/><rect x="987.2" y="508.50" width="67.6" height="17.0" fill="#cf95cf"/><rect x="1096.2" y="508.50" width="1.6" height="17.0" fill="#cf95cf"/><rect x="1126.0" y="508.50" width="0.8" height="17.0" fill="#e2bfe4"/><rect x="415.0" y="527.25" width="83.0" height="17.0" fill="#94d1a9"/><rect x="691.3" y="527.25" width="16.0" height="17.0" fill="#94d1a9"/><rect x="991.8" y="527.25" width="4.6" height="17.0" fill="#cf95cf"/><rect x="1035.6" y="527.25" width="1.6" height="17.0" fill="#cf95cf"/><rect x="1096.2" y="527.25" width="30.1" height="17.0" fill="#cf95cf"/><rect x="415.0" y="546.00" width="153.8" height="17.0" fill="#94d1a9"/><rect x="1035.6" y="546.00" width="19.3" height="17.0" fill="#cf95cf"/><rect x="1096.2" y="546.00" width="29.4" height="17.0" fill="#cf95cf"/><rect x="1126.4" y="546.00" width="3.1" height="17.0" fill="#cf95cf"/><rect x="499.0" y="564.75" width="69.8" height="17.0" fill="#94d1a9"/><rect x="1038.0" y="564.75" width="16.9" height="17.0" fill="#cf95cf"/><rect x="1098.1" y="564.75" width="1.3" height="17.0" fill="#cf95cf"/><rect x="1110.1" y="564.75" width="0.8" height="17.0" fill="#e2bfe4"/><rect x="1121.0" y="564.75" width="1.0" height="17.0" fill="#cf95cf"/><rect x="1125.9" y="564.75" width="3.6" height="17.0" fill="#cf95cf"/><rect x="1098.7" y="583.50" width="0.8" height="17.0" fill="#e2bfe4"/><rect x="1110.1" y="583.50" width="0.8" height="17.0" fill="#e2bfe4"/><rect x="1121.1" y="583.50" width="0.8" height="17.0" fill="#e2bfe4"/><rect x="1127.0" y="583.50" width="1.6" height="17.0" fill="#cf95cf"/><rect x="1099.4" y="602.25" width="10.6" height="17.0" fill="#cf95cf"/><rect x="1110.8" y="602.25" width="10.8" height="17.0" fill="#cf95cf"/><rect x="1122.4" y="602.25" width="1.8" height="17.0" fill="#cf95cf"/><rect x="1099.4" y="621.00" width="10.6" height="17.0" fill="#cf95cf"/><rect x="1110.8" y="621.00" width="10.8" height="17.0" fill="#cf95cf"/><rect x="1122.4" y="621.00" width="2.9" height="17.0" fill="#cf95cf"/><rect x="1100.5" y="639.75" width="9.3" height="17.0" fill="#cf95cf"/><rect x="1113.0" y="639.75" width="7.0" height="17.0" fill="#cf95cf"/><rect x="1123.2" y="639.75" width="1.0" height="17.0" fill="#e2bfe4"/></g>
<g stroke="#000" stroke-opacity="0.1" stroke-width="1"><line x1="170.8" y1="339" x2="170.8" y2="678.500" /><line x1="273.4" y1="339" x2="273.4" y2="678.500" /><line x1="376.1" y1="339" x2="376.1" y2="678.500" /><line x1="478.7" y1="339" x2="478.7" y2="678.500" /><line x1="581.4" y1="339" x2="581.4" y2="678.500" /><line x1="684.0" y1="339" x2="684.0" y2="678.500" /><line x1="786.7" y1="339" x2="786.7" y2="678.500" /><line x1="889.3" y1="339" x2="889.3" y2="678.500" /><line x1="992.0" y1="339" x2="992.0" y2="678.500" /><line x1="1094.6" y1="339" x2="1094.6" y2="678.500" /><line x1="1197.2" y1="339" x2="1197.2" y2="678.500" /></g>
<g font-family="'DejaVu Sans',sans-serif" font-size="11.7" fill="#262626" stroke="#262626" stroke-width="0.22"><text x="109.5" y="389.25">Displayed in 1088.00ms</text><text x="319.5" y="408.00">NativeScriptApplication.onCreate</text><text x="843.0" y="408.00">ActivityC…t Object]</text><text x="981.5" y="408.00">Activ…ject]</text><text x="1067.5" y="408.00">ViewB…1:1;</text><text x="322.5" y="426.75">Runti…time</text><text x="402.3" y="426.75">Runtime.run</text><text x="1068.5" y="426.75">Fragm…ect]</text><text x="353.8" y="445.50">R…</text><text x="404.3" y="445.50">Load</text><text x="870.8" y="445.50">o…2</text><text x="1098.5" y="445.50">Pa…1;</text><text x="404.3" y="464.25" textLength="392">RequireCallback /data/data/org.n…t.devtest/files/app/./bundle.js</text><text x="404.3" y="483.00" textLength="390.3">LoadModule /data/data/org.nativ…ipt.devtest/files/app/bundle.js</text><text x="992.7" y="483.00">Vi…1;</text><text x="1099.5" y="483.00">Vi…1;</text><text x="420.5" y="501.75" textLength="142.7">RequireCall…./vendor.js</text><text x="648.3" y="501.75">Ma…p</text><text x="756.3" y="501.75">C…</text><text x="992.7" y="501.75">Vi…1;</text><text x="1099.5" y="501.75">Vi…1;</text><text x="420.5" y="520.50" textLength="143.5">LoadModule…/vendor.js</text><text x="648.3" y="520.50">M…</text><text x="756.3" y="520.50">C…</text><text x="992.7" y="520.50">Fram…:1;</text><text x="420.5" y="539.25">Wrap…tent</text><text x="420.5" y="558.00" textLength="137.2">LoadScript …/vendor.js</text><text x="504.5" y="576.75">Com…che</text></g>
<g font-family="'DejaVu Sans Condensed','DejaVu Sans',sans-serif" font-size="13.05" fill="#2e2e2e" stroke="#2e2e2e" stroke-width="0.2"><text x="165.2" y="352.9" text-anchor="end">100 ms</text><text x="267.8" y="352.9" text-anchor="end">200 ms</text><text x="370.4" y="352.9" text-anchor="end">300 ms</text><text x="473.1" y="352.9" text-anchor="end">400 ms</text><text x="575.8" y="352.9" text-anchor="end">500 ms</text><text x="678.4" y="352.9" text-anchor="end">600 ms</text><text x="781.1" y="352.9" text-anchor="end">700 ms</text><text x="883.7" y="352.9" text-anchor="end">800 ms</text><text x="986.4" y="352.9" text-anchor="end">900 ms</text><text x="1089.0" y="352.9" text-anchor="end">1000 ms</text><text x="1191.7" y="352.9" text-anchor="end">1100 ms</text>
<text x="135" y="371.3" font-size="11.6" font-family="'DejaVu Sans',sans-serif">Thread 1</text>
<path d="M121.7 364.2 L130.7 364.2 L126.2 370.9 Z" fill="#444" stroke="none"/>
<path d="M105.300 659.300 V357.200 H115 M105.300 658.300 H115" fill="none" stroke="#4a82e4" stroke-width="1.800"/>
</g>
</svg>
</body>
</html>
